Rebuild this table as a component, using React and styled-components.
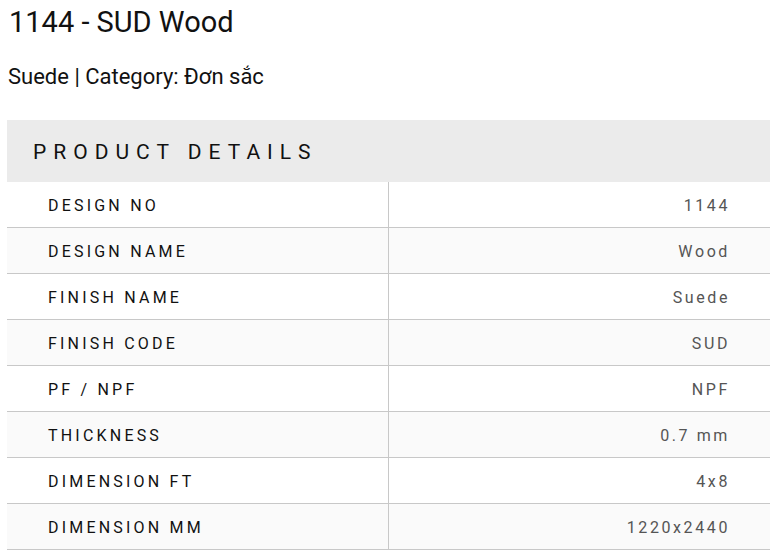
import React from 'react'
import styled, { createGlobalStyle } from 'styled-components'

const GlobalStyle = createGlobalStyle`
  body {
    margin: 0;
    background: #fff;
    font-family: Roboto, "Noto Sans", sans-serif;
    color: #111;
  }
`

const Page = styled.div`
  padding: 0 11px 0 7px;
`

const Title = styled.h1`
  margin: 0;
  height: 40px;
  padding: 4px 0 0 2px;
  box-sizing: border-box;
  font-size: 29px;
  font-weight: 400;
  line-height: 36px;
  color: #111;
`

const Subtitle = styled.p`
  margin: 0;
  height: 80px;
  padding: 23px 0 0 1px;
  box-sizing: border-box;
  font-size: 22px;
  line-height: 28px;
  color: #111;
`

const Header = styled.div`
  height: 62px;
  background: #ebebeb;
  display: flex;
  align-items: center;
  padding: 2px 0 0 26px;
  box-sizing: border-box;
  font-size: 21px;
  letter-spacing: 7px;
  text-transform: uppercase;
  color: #111;
`

const Table = styled.div`
  display: flex;
  flex-direction: column;
`

const Row = styled.div`
  display: grid;
  grid-template-columns: 382px 1fr;
  height: 46px;
  border-bottom: 1px solid #c8c8c8;
  box-sizing: border-box;
  background: ${p => (p.$alt ? '#fafafa' : '#fff')};
`

const Label = styled.div`
  display: flex;
  align-items: center;
  padding: 2px 0 0 41px;
  border-right: 1px solid #c8c8c8;
  font-size: 16px;
  letter-spacing: 3.2px;
  text-transform: uppercase;
  color: #111;
`

const Value = styled.div`
  display: flex;
  align-items: center;
  justify-content: flex-end;
  padding: 2px 40px 0 0;
  font-size: 16px;
  letter-spacing: 2.6px;
  color: #555;
`

const details = [
  ['Design No', '1144'],
  ['Design Name', 'Wood'],
  ['Finish Name', 'Suede'],
  ['Finish Code', 'SUD'],
  ['PF / NPF', 'NPF'],
  ['Thickness', '0.7 mm'],
  ['Dimension FT', '4x8'],
  ['Dimension MM', '1220x2440'],
]

export default function App() {
  return (
    <Page>
      <GlobalStyle />
      <Title>1144 - SUD Wood</Title>
      <Subtitle>Suede | Category: Đơn sắc</Subtitle>
      <Header>Product Details</Header>
      <Table>
        {details.map(([label, value], i) => (
          <Row key={label} $alt={i % 2 === 1}>
            <Label>{label}</Label>
            <Value>{value}</Value>
          </Row>
        ))}
      </Table>
    </Page>
  )
}
